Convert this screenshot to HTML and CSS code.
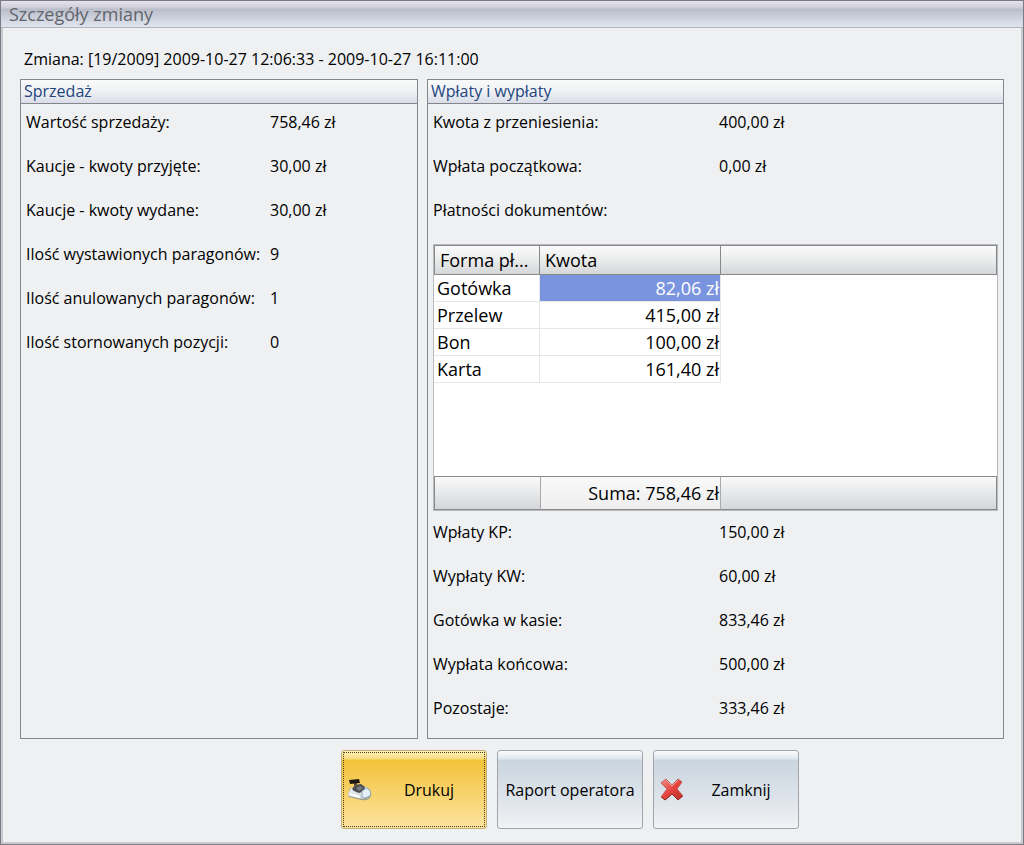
FILE: index.html
```
<!DOCTYPE html>
<html lang="pl">

<head>
  <meta charset="UTF-8">
  <meta name="viewport" content="width=device-width, initial-scale=1.0">
  <title>Szczegóły zmiany</title>
  <link rel="stylesheet" href="styles.css">
</head>

<body>
  <div class="window">
    <header class="title-bar">
      <h1>Szczegóły zmiany</h1>
    </header>

    <main class="content">
      <p class="shift-info">Zmiana: [19/2009] 2009-10-27 12:06:33 - 2009-10-27 16:11:00</p>

      <div class="panels">
        <!-- Sales -->
        <section class="panel">
          <h2>Sprzedaż</h2>
          <dl class="list list-sales">
            <dt>Wartość sprzedaży:</dt>
            <dd>758,46 zł</dd>
            <dt>Kaucje - kwoty przyjęte:</dt>
            <dd>30,00 zł</dd>
            <dt>Kaucje - kwoty wydane:</dt>
            <dd>30,00 zł</dd>
            <dt>Ilość wystawionych paragonów:</dt>
            <dd>9</dd>
            <dt>Ilość anulowanych paragonów:</dt>
            <dd>1</dd>
            <dt>Ilość stornowanych pozycji:</dt>
            <dd>0</dd>
          </dl>
        </section>

        <!-- Deposits and withdrawals -->
        <section class="panel">
          <h2>Wpłaty i wypłaty</h2>
          <dl class="list list-cash">
            <dt>Kwota z przeniesienia:</dt>
            <dd>400,00 zł</dd>
            <dt>Wpłata początkowa:</dt>
            <dd>0,00 zł</dd>
            <dt id="paymentsLabel">Płatności dokumentów:</dt>
            <dd></dd>
          </dl>

          <div class="grid-wrapper">
            <table class="grid" aria-labelledby="paymentsLabel">
              <colgroup>
                <col class="col-form">
                <col class="col-amount">
                <col>
              </colgroup>
              <thead>
                <tr>
                  <th>Forma pł...</th>
                  <th>Kwota</th>
                  <th></th>
                </tr>
              </thead>
              <tbody>
                <tr class="row">
                  <td>Gotówka</td>
                  <td class="amount selected">82,06 zł</td>
                  <td></td>
                </tr>
                <tr class="row">
                  <td>Przelew</td>
                  <td class="amount">415,00 zł</td>
                  <td></td>
                </tr>
                <tr class="row">
                  <td>Bon</td>
                  <td class="amount">100,00 zł</td>
                  <td></td>
                </tr>
                <tr class="row">
                  <td>Karta</td>
                  <td class="amount">161,40 zł</td>
                  <td></td>
                </tr>
                <tr>
                  <td colspan="3"></td>
                </tr>
              </tbody>
              <tfoot>
                <tr>
                  <td></td>
                  <td class="amount sum">Suma: 758,46 zł</td>
                  <td></td>
                </tr>
              </tfoot>
            </table>
          </div>

          <dl class="list list-cash">
            <dt>Wpłaty KP:</dt>
            <dd>150,00 zł</dd>
            <dt>Wypłaty KW:</dt>
            <dd>60,00 zł</dd>
            <dt>Gotówka w kasie:</dt>
            <dd>833,46 zł</dd>
            <dt>Wypłata końcowa:</dt>
            <dd>500,00 zł</dd>
            <dt>Pozostaje:</dt>
            <dd>333,46 zł</dd>
          </dl>
        </section>
      </div>

      <div class="actions">
        <button type="button" class="button button-primary">
          <svg class="icon" viewBox="0 0 24 24" aria-hidden="true">
            <defs>
              <linearGradient id="printerBody" x1="0" y1="0" x2="1" y2="1">
                <stop offset="0" stop-color="#f4f6f6" />
                <stop offset="1" stop-color="#c3ced5" />
              </linearGradient>
            </defs>
            <path d="M0 17 L2 10 L13 7 L20 10 Q24 13 23 18 L21 21 Q17 23 13 22 L1 19 Z" fill="#a09f86" />
            <path d="M0 16 L3 10 L13 7 L20 10 L21 19 L14 21 L1 18 Z" fill="url(#printerBody)" />
            <path d="M4 11 L7 7 L13 6 L17 9 L16 13 L11 15 L6 13 Z" fill="#4b4d50" />
            <path d="M8 10 L12 8 L15 10 L11 13 Z" fill="#777d82" />
            <path d="M14 13 L19 10 Q24 13 22 18 L17 20 L14 19 Z" fill="#e3eef8" stroke="#93abbb" />
            <path d="M2 16 L12 19" stroke="#ffffff" stroke-width="2" />
            <path d="M6 5 L9 5 L9 9 L6 9 Z" fill="#5b5142" />
            <path d="M1 2 L11 1 L12 5 L2 6 Z" fill="#21190f" />
          </svg>
          <span>Drukuj</span>
        </button>
        <button type="button" class="button">
          <span>Raport operatora</span>
        </button>
        <button type="button" class="button">
          <svg class="icon" viewBox="0 0 24 24" aria-hidden="true">
            <defs>
              <linearGradient id="crossFill" x1="0" y1="0" x2="1" y2="1">
                <stop offset="0" stop-color="#f0938b" />
                <stop offset="0.5" stop-color="#e5443c" />
                <stop offset="1" stop-color="#b92e2a" />
              </linearGradient>
            </defs>
            <path d="M1 5 L6 1 L12 7 L18 1 L22 4 L17 11 L23 18 L18 22 L12 16 L5 22 L1 19 L7 11 Z" fill="url(#crossFill)" stroke="#c25a54" />
            <path d="M6 2 L12 8 L18 2" fill="none" stroke="#f5aaa3" />
            <path d="M2 19 L5 22 L12 16 L18 22 L22 18" fill="none" stroke="#8f2b29" />
          </svg>
          <span>Zamknij</span>
        </button>
      </div>
    </main>
  </div>
</body>

</html>
```

FILE: styles.css
```
* {
  box-sizing: border-box;
}

body {
  margin: 0;
  font-family: "Trebuchet MS", "Open Sans", "Noto Sans", sans-serif;
  font-size: 16px;
  line-height: 24px;
  color: #000;
}

h1,
h2,
p,
dl,
dd {
  margin: 0;
}

/* Window frame */
.window {
  display: flex;
  flex-direction: column;
  min-height: 100vh;
  background-color: #eff0f2;
  border: 1px solid #7c7b83;
  box-shadow: inset 0 0 0 2px #c9c9d2;
}

.title-bar {
  height: 27px;
  padding: 0 8px;
  background: linear-gradient(#e4e4ec 0, #cdccd7 7px, #b8bdc9 8px, #dfe3ed 25px);
  border-bottom: 1px solid #b2b5c1;
}

.title-bar h1 {
  font-size: 18px;
  font-weight: normal;
  line-height: 26px;
  color: #63656d;
}

.content {
  display: flex;
  flex-direction: column;
  flex: 1;
  padding: 19px 19px 15px;
}

.shift-info {
  padding: 0 4px;
  margin-bottom: 8px;
}

/* Group panels */
.panels {
  display: grid;
  grid-template-columns: 398fr 577fr;
  gap: 9px;
  flex: 1;
}

.panel {
  border: 1px solid #85868c;
}

.panel h2 {
  height: 24px;
  padding: 0 3px;
  font-size: 16px;
  font-weight: normal;
  line-height: 23px;
  color: #23457d;
  background: linear-gradient(#f9fafa, #eff1f4 50%, #dadde8);
  border-bottom: 1px solid #85868c;
}

.list {
  display: grid;
  row-gap: 20px;
  padding: 6px 5px 4px;
}

.list dt {
  white-space: nowrap;
}

.list-sales {
  grid-template-columns: 244px 1fr;
}

.list-cash {
  grid-template-columns: 286px 1fr;
}

/* Payments table */
.grid-wrapper {
  margin: 18px 5px 3px;
  background-color: #fff;
  border: 1px solid #b9babd;
}

.grid {
  width: 100%;
  height: 265px;
  table-layout: fixed;
  border-collapse: separate;
  border-spacing: 0;
  font-size: 18px;
  line-height: 24px;
}

.col-form {
  width: 106px;
}

.col-amount {
  width: 181px;
}

.grid th,
.grid td {
  padding: 0 3px;
  text-align: left;
  white-space: nowrap;
}

.grid th {
  height: 30px;
  padding: 0 5px;
  font-weight: normal;
  background: linear-gradient(#fbfbfb, #eceded 45%, #d5d6d8);
  border: 1px solid #88898c;
  border-left: none;
}

.grid th:first-child {
  border-left: 1px solid #88898c;
}

.grid .row td {
  height: 27px;
}

.grid .row td:nth-child(-n+2) {
  border-right: 1px solid #e6e6e6;
  border-bottom: 1px solid #e6e6e6;
}

.grid .amount {
  padding: 0 1px;
  text-align: right;
}

.grid .selected {
  color: #fff;
  background-color: #7a94df;
}

.grid tfoot td {
  height: 34px;
  background: linear-gradient(#fbfbfb, #e9eaeb 45%, #d5d6d8);
  border-top: 1px solid #88898c;
  border-bottom: 1px solid #88898c;
}

.grid tfoot td:first-child {
  border-left: 1px solid #88898c;
}

.grid tfoot td:last-child {
  border-right: 1px solid #88898c;
}

.grid tfoot .sum {
  background: linear-gradient(#f9f9f9, #eeeeef);
  border-right: 1px solid #a9aaad;
  border-left: 1px solid #a9aaad;
}

/* Bottom buttons */
.actions {
  display: flex;
  justify-content: center;
  gap: 10px;
  padding: 11px 0 0 116px;
}

.button {
  display: flex;
  align-items: center;
  gap: 6px;
  width: 146px;
  height: 79px;
  padding: 0 6px;
  font: inherit;
  color: #000;
  white-space: nowrap;
  background: linear-gradient(#fafcfd 0, #dfe7ee 8px, #cad5df 9px, #dde3ea 60%, #f1f2f5);
  border: 1px solid #a2a4a9;
  border-radius: 3px;
  cursor: pointer;
}

.button span {
  flex: 1;
  text-align: center;
}

.button-primary {
  background: linear-gradient(#fff2bd 0, #f9dc80 8px, #f3c237 9px, #f7d166 50%, #fce3a0);
  border-color: #c5ae75;
  outline: 1px dotted #4d3b10;
  outline-offset: -3px;
}

.icon {
  flex: none;
  width: 24px;
  height: 24px;
}
```
